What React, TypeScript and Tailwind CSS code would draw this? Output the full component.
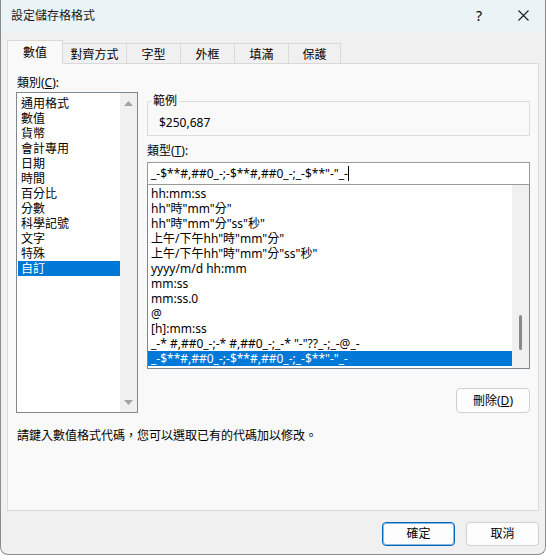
import React from 'react';

const categories = ['通用格式', '數值', '貨幣', '會計專用', '日期', '時間', '百分比', '分數', '科學記號', '文字', '特殊', '自訂'];

const formats = [
    'hh:mm:ss',
    'hh"時"mm"分"',
    'hh"時"mm"分"ss"秒"',
    '上午/下午hh"時"mm"分"',
    '上午/下午hh"時"mm"分"ss"秒"',
    'yyyy/m/d hh:mm',
    'mm:ss',
    'mm:ss.0',
    '@',
    '[h]:mm:ss',
    '_-* #,##0_-;-* #,##0_-;_-* "-"??_-;_-@_-',
    '_-$**#,##0_-;-$**#,##0_-;_-$**"-"_-',
];

// inactive tabs, widths include the shared right border
const tabs = [
    { label: '對齊方式', w: 'w-[64px]' },
    { label: '字型', w: 'w-[54px]' },
    { label: '外框', w: 'w-[54px]' },
    { label: '填滿', w: 'w-[54px]' },
    { label: '保護', w: 'w-[52px]' },
];

const Arrow = ({ down }: { down?: boolean }) => (
    <svg width="9" height="5" viewBox="0 0 9 5">
        <path d={down ? 'M0 0 L9 0 L4.5 5 Z' : 'M0 5 L4.5 0 L9 5 Z'} fill="#a3a3a3" />
    </svg>
);

export default function App() {
    const selectedCategory = '自訂';
    const selectedFormat = formats[formats.length - 1];

    return (
        <div className="w-[547px] h-[556px] bg-white text-[12px] leading-[16px] text-black font-['Noto_Sans','Noto_Sans_CJK_TC',sans-serif]">
            <div className="flex h-[555px] w-[546px] flex-col overflow-hidden rounded-b-[8px] border-x border-b border-[#8c8c8c] bg-[#f0f0f0]">
                {/* Title bar */}
                <div className="flex h-[31px] shrink-0 items-center bg-[#eaf3f6] pl-[10px]">
                    <span className="flex-1 text-[#1a1a1a]">設定儲存格格式</span>
                    <span className="flex h-[31px] w-[44px] items-center justify-center text-[14px]">?</span>
                    <span className="flex h-[31px] w-[44px] items-center justify-center">
                        <svg width="11" height="11" viewBox="0 0 11 11">
                            <path d="M0.5 0.5 L10.5 10.5 M10.5 0.5 L0.5 10.5" stroke="#1a1a1a" strokeWidth="1.1" />
                        </svg>
                    </span>
                </div>

                {/* Tabs */}
                <div className="mt-[9px] flex h-[23px] shrink-0 items-end px-[6px]">
                    <div className="relative z-10 -mb-px flex h-[24px] w-[56px] items-center justify-center border-x border-t border-[#d9d9d9] bg-[#f9f9f9]">
                        數值
                    </div>
                    {tabs.map((t) => (
                        <div
                            key={t.label}
                            className={`flex h-[20px] ${t.w} items-center justify-center border-r border-t border-[#d9d9d9] bg-[#f0f0f0] pt-[2px]`}
                        >
                            {t.label}
                        </div>
                    ))}
                </div>

                {/* Tab panel */}
                <div className="mx-[6px] flex h-[448px] shrink-0 flex-col border border-[#d9d9d9] bg-[#f9f9f9] px-[8px]">
                    <div className="flex gap-[9px]">
                        {/* Category list */}
                        <div className="flex w-[122px] flex-col pt-[11px]">
                            <div className="h-[16px] pl-[1px]">
                                類別(<span className="underline">C</span>):
                            </div>
                            <div className="mt-[1px] flex h-[321px] border border-[#828790] bg-white">
                                <div className="flex-1 pt-[3px] pl-[1px] leading-[15px]">
                                    {categories.map((c) => (
                                        <div
                                            key={c}
                                            className={`h-[15px] overflow-hidden pl-[3px] ${c === selectedCategory ? 'bg-[#0078d7] text-white' : ''}`}
                                        >
                                            {c}
                                        </div>
                                    ))}
                                </div>
                                <div className="flex w-[17px] flex-col items-center justify-between bg-[#f0f0f0] pt-[8px] pb-[7px]">
                                    <Arrow />
                                    <Arrow down />
                                </div>
                            </div>
                        </div>

                        {/* Format code editor */}
                        <div className="flex w-[383px] flex-col">
                            <fieldset className="mt-[29px] border border-[#dcdcdc] pb-[4px]">
                                <legend className="ml-[3px] px-[2px] leading-[16px]">範例</legend>
                                <div className="pl-[11px] pt-[6px]">$250,687</div>
                            </fieldset>

                            <div className="mt-[7px] h-[16px]">
                                類型(<span className="underline">T</span>):
                            </div>
                            <div className="mt-[3px] flex h-[23px] items-center border border-[#9a9a9a] bg-white pl-[3px]">
                                <span>{selectedFormat}</span>
                                <span className="inline-block h-[15px] w-px bg-black" />
                            </div>

                            <div className="flex h-[184px] border-x border-b border-[#828790] bg-white">
                                <div className="flex-1 pt-[1px] leading-[15px]">
                                    {formats.map((f) => (
                                        <div
                                            key={f}
                                            className={`h-[15px] overflow-hidden whitespace-pre pl-[3px] ${f === selectedFormat ? 'bg-[#0078d7] text-white' : ''}`}
                                        >
                                            {f}
                                        </div>
                                    ))}
                                </div>
                                <div className="w-[17px] bg-[#f0f0f0] pl-[7px] pt-[130px]">
                                    <div className="h-[35px] w-[3px] rounded-full bg-[#8a8a8a]" />
                                </div>
                            </div>

                            <button className="mt-[19px] h-[25px] w-[74px] self-end rounded-[4px] border border-[#d0d0d0] bg-[#fdfdfd]">
                                刪除(<span className="underline">D</span>)
                            </button>
                        </div>
                    </div>

                    <div className="mt-[15px] pl-[1px]">請鍵入數值格式代碼，您可以選取已有的代碼加以修改。</div>
                </div>

                {/* Dialog buttons */}
                <div className="mt-[11px] flex justify-end gap-[11px] pr-[6px]">
                    <button className="h-[24px] w-[73px] rounded-[4px] border border-[#0067c0] bg-[#fdfdfd] shadow-[inset_0_0_0_1px_rgba(0,103,192,0.45)]">
                        確定
                    </button>
                    <button className="h-[24px] w-[73px] rounded-[4px] border border-[#d0d0d0] bg-[#fdfdfd]">
                        取消
                    </button>
                </div>
            </div>
        </div>
    );
}
